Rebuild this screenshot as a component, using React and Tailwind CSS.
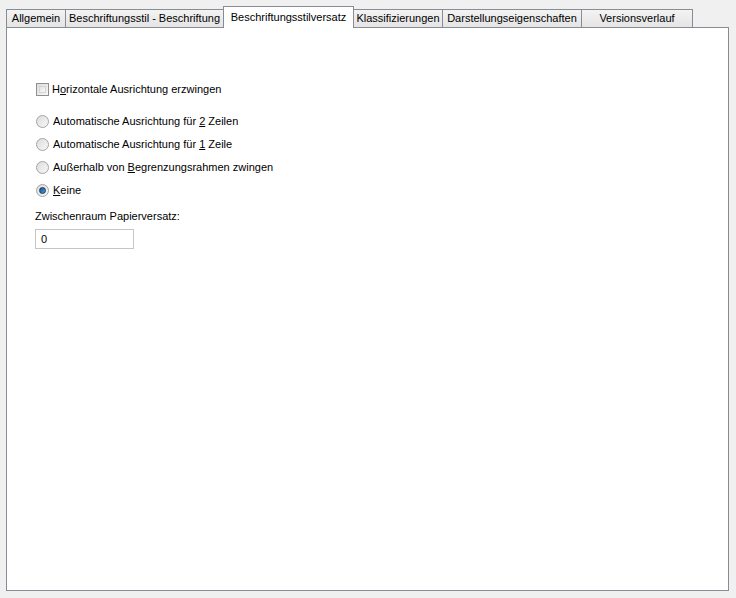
import React from "react";

const tabs = [
  { label: "Allgemein", w: 60 },
  { label: "Beschriftungsstil - Beschriftung", w: 159 },
  { label: "Beschriftungsstilversatz", w: 131, active: true },
  { label: "Klassifizierungen", w: 90 },
  { label: "Darstellungseigenschaften", w: 140 },
  { label: "Versionsverlauf", w: 112 },
];

function Radio({ checked }) {
  return (
    <span className="relative inline-flex w-[13px] h-[13px] rounded-full border border-[#a3a3a3] bg-gradient-to-br from-[#dcdcdc] to-[#f8f8f8] items-center justify-center shrink-0">
      {checked && (
        <span className="w-[7px] h-[7px] rounded-full bg-gradient-to-br from-[#1a4f86] to-[#4d9be0] border border-[#123a66]" />
      )}
    </span>
  );
}

function RadioRow({ checked, children }) {
  return (
    <div className="flex items-center gap-[4px] h-[14px]">
      <Radio checked={checked} />
      <span>{children}</span>
    </div>
  );
}

export default function App() {
  return (
    <div
      className="w-[736px] h-[598px] bg-[#f0f0f0] pt-[6px] px-[6px] text-[11px] text-black"
      style={{ fontFamily: '"Liberation Sans", Arial, sans-serif' }}
    >
      <div className="flex items-end h-[21px]">
        {tabs.map((t, i) =>
          t.active ? (
            <div
              key={i}
              style={{ width: t.w }}
              className="relative z-10 -ml-px -mb-px h-[22px] bg-white border border-b-0 border-[#898c95] flex items-start justify-center pt-[4px] leading-[13px] whitespace-nowrap"
            >
              {t.label}
            </div>
          ) : (
            <div
              key={i}
              style={{ width: t.w }}
              className={`${i === 0 ? "" : "-ml-px"} h-[18px] border border-b-0 border-[#898c95] bg-gradient-to-b from-[#f3f3f3] to-[#e4e4e4] flex items-start justify-center pt-[2px] leading-[13px] whitespace-nowrap`}
            >
              {t.label}
            </div>
          )
        )}
      </div>
      <div className="h-[564px] w-[723px] bg-white border border-[#898c95] pl-[29px] pt-[54px]">
        <div className="flex items-center gap-[3px] h-[14px]">
          <span className="w-[13px] h-[13px] border border-[#8f8f8f] bg-gradient-to-br from-[#dcdcdc] to-[#f8f8f8] shrink-0 p-[2px]">
            <span className="block w-full h-full border border-[#d4d4d4] bg-gradient-to-br from-[#e2e2e2] to-[#fafafa]" />
          </span>
          <span>
            H<span className="underline">o</span>rizontale Ausrichtung erzwingen
          </span>
        </div>
        <div className="mt-[18px] flex flex-col gap-[9px]">
          <RadioRow>
            Automatische Ausrichtung für <span className="underline">2</span> Zeilen
          </RadioRow>
          <RadioRow>
            Automatische Ausrichtung für <span className="underline">1</span> Zeile
          </RadioRow>
          <RadioRow>
            Außerhalb von <span className="underline">B</span>egrenzungsrahmen zwingen
          </RadioRow>
          <RadioRow checked>
            <span className="underline">K</span>eine
          </RadioRow>
        </div>
        <div className="mt-[12px] leading-[14px] -ml-[1px]">Zwischenraum Papierversatz:</div>
        <div className="mt-[6px] -ml-[1px] w-[99px] h-[20px] border border-[#c5c5c5] bg-white pl-[5px] leading-[18px]">
          0
        </div>
      </div>
    </div>
  );
}
